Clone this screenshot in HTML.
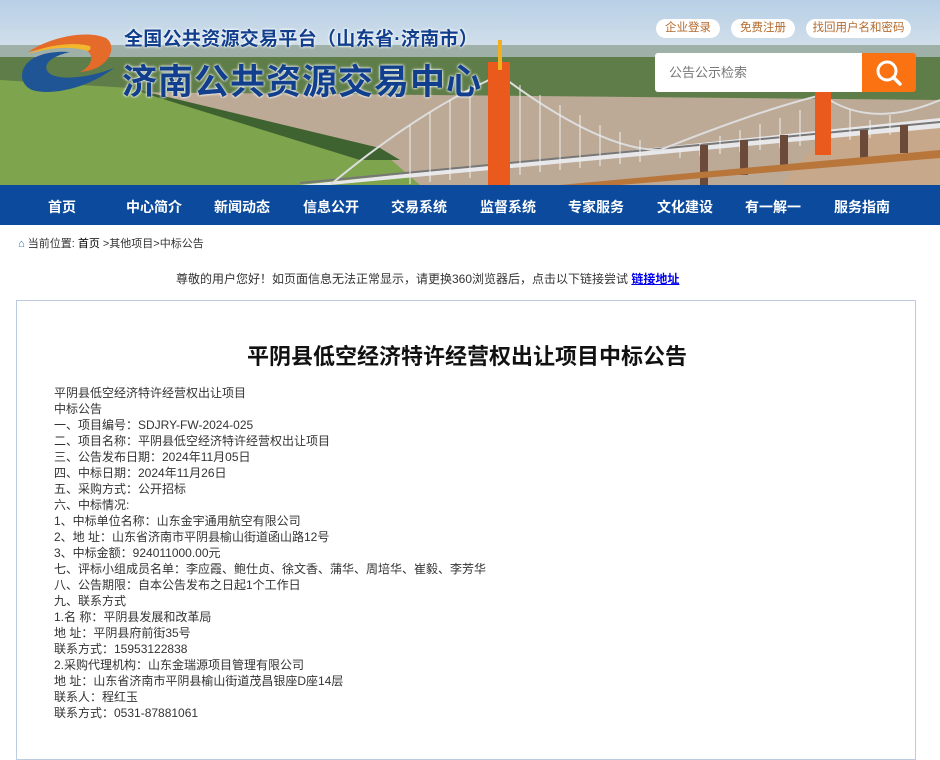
<!DOCTYPE html>
<html><head><meta charset="utf-8"><style>
*{margin:0;padding:0;box-sizing:border-box}
body{width:940px;height:741px;overflow:hidden;background:#fff;font-family:"Liberation Sans","Noto Sans CJK SC",sans-serif;color:#333;position:relative}
.hdr{position:absolute;left:0;top:0;width:940px;height:185px;overflow:hidden}
.nav{position:absolute;left:0;top:185px;width:940px;height:40px;background:#0b4a9c}
.nav span{position:absolute;top:12px;color:#fff;font-size:14px;font-weight:bold}
.t1{position:absolute;left:124px;top:24px;color:#123f8d;font-size:19px;font-weight:bold;letter-spacing:0.3px;text-shadow:0 0 3px #fff,0 0 2px #fff}
.t2{position:absolute;left:122px;top:54px;color:#123f8d;font-size:35px;font-weight:bold;letter-spacing:1px;text-shadow:0 0 3px #fff,0 0 2px #fff}
.pill{position:absolute;top:19px;height:19px;border-radius:10px;background:#fff;color:#b56a2c;font-size:11.5px;line-height:19px;text-align:center}
.search{position:absolute;left:655px;top:53px;width:208px;height:39px;background:#fff;border-radius:3px 0 0 3px;font-size:13px;color:#777;line-height:39px;padding-left:14px}
.sbtn{position:absolute;left:862px;top:53px;width:54px;height:39px;background:#fa7212;border-radius:0 3px 3px 0}
.bc{position:absolute;left:18px;top:235px;font-size:11px;color:#333}
.notice{position:absolute;top:270px;font-size:12px;color:#333}
.notice a{color:#00e;font-weight:bold;text-decoration:underline}
.box{position:absolute;left:16px;top:300px;width:900px;height:460px;border:1px solid #bccbe0}
.title{position:absolute;left:0;width:900px;top:38px;text-align:center;font-size:22px;font-weight:bold;color:#111}
.body{position:absolute;left:37px;top:84px;font-size:12px;line-height:16px;color:#333}
</style></head><body>
<div class="hdr">
<svg width="940" height="185" viewBox="0 0 940 185" style="position:absolute;left:0;top:0">
<defs><linearGradient id="sky" x1="0" y1="0" x2="0" y2="1"><stop offset="0" stop-color="#b7cfe6"/><stop offset="1" stop-color="#d3e0ea"/></linearGradient></defs>
<rect width="940" height="50" fill="url(#sky)"/>
<rect y="45" width="940" height="60" fill="#5f7d48"/>
<rect y="45" width="940" height="12" fill="#9fb0a8"/>
<path d="M120 92 L940 100 L940 185 L330 185 Z" fill="#bca996"/>
<path d="M0 80 L130 88 L380 150 L420 185 L0 185 Z" fill="#7ea44e"/>
<path d="M130 88 L380 148 L400 160 L360 160 L150 95 Z" fill="#3f6330"/>
<path d="M820 140 L940 125 L940 185 L780 185 Z" fill="#c8a88a"/>
<path d="M300 185 L940 118 L940 128 L330 185 Z" fill="#e8e8ea"/>
<path d="M300 183 L940 122" stroke="#777" stroke-width="2"/>
<path d="M330 185 Q420 110 500 75 Q600 150 660 150 Q760 110 822 95 Q870 130 940 100" fill="none" stroke="#ddd" stroke-width="2"/>
<g stroke="#eee" stroke-width="1">
<path d="M520 85 V175 M540 95 V172 M560 105 V170 M580 115 V168 M600 125 V166 M620 132 V164 M640 140 V162 M680 148 V158 M700 143 V156 M720 136 V154 M740 130 V152 M760 124 V150 M780 118 V148 M800 110 V146 M850 110 V140 M870 120 V138 M890 115 V135 M470 90 V178 M450 100 V180 M430 112 V182 M410 125 V184"/>
</g>
<rect x="488" y="62" width="22" height="123" fill="#e95a1c"/>
<rect x="498" y="40" width="4" height="30" fill="#f0b020"/>
<rect x="815" y="90" width="16" height="65" fill="#e95a1c"/>
<g fill="#6b4a3a"><rect x="700" y="145" width="8" height="40"/><rect x="740" y="140" width="8" height="35"/><rect x="780" y="135" width="8" height="35"/><rect x="860" y="130" width="8" height="30"/><rect x="900" y="125" width="8" height="28"/></g>
<path d="M560 185 L940 150 L940 158 L620 185Z" fill="#b8763a"/>
</svg>
<svg style="position:absolute;left:18px;top:30px" width="96" height="64" viewBox="0 0 96 64">
<path d="M10 22 C34 6 70 0 88 8 C100 16 92 40 62 42 C78 34 76 20 62 18 C44 16 26 18 10 22Z" fill="#e46b2a"/>
<path d="M10 24 C30 14 58 12 72 16 C74 20 70 22 66 20 C50 16 30 18 10 24Z" fill="#f3b72e"/>
<path d="M4 46 C4 30 24 20 52 22 C34 26 24 34 30 42 C36 50 66 50 96 38 C70 58 34 66 14 60 C6 56 4 50 4 46Z" fill="#1f5595"/>
</svg>
</div>
<div class="t1">全国公共资源交易平台（山东省·济南市）</div>
<div class="t2">济南公共资源交易中心</div>
<div class="pill" style="left:656px;width:64px">企业登录</div>
<div class="pill" style="left:731px;width:64px">免费注册</div>
<div class="pill" style="left:806px;width:105px">找回用户名和密码</div>
<div class="search">公告公示检索</div>
<div class="sbtn"><svg width="54" height="39" viewBox="0 0 54 39"><circle cx="25" cy="18" r="9" fill="none" stroke="#fff" stroke-width="3"/><path d="M31.5 24.5 L38 31" stroke="#fff" stroke-width="3.5" stroke-linecap="round"/></svg></div>
<div class="nav">
<span style="left:48px">首页</span><span style="left:126px">中心简介</span><span style="left:214px">新闻动态</span><span style="left:303px">信息公开</span><span style="left:391px">交易系统</span><span style="left:480px">监督系统</span><span style="left:568px">专家服务</span><span style="left:657px">文化建设</span><span style="left:745px">有一解一</span><span style="left:834px">服务指南</span>
</div>
<div class="bc"><span style="color:#2a6fc0">⌂</span> 当前位置: <span style="color:#000">首页</span> &gt;其他项目&gt;中标公告</div>
<div class="notice" style="left:176px">尊敬的用户您好！如页面信息无法正常显示，请更换360浏览器后，点击以下链接尝试 <a>链接地址</a></div>
<div class="box">
<div class="title">平阴县低空经济特许经营权出让项目中标公告</div>
<div class="body">平阴县低空经济特许经营权出让项目<br>中标公告<br>一、项目编号：SDJRY-FW-2024-025<br>二、项目名称：平阴县低空经济特许经营权出让项目<br>三、公告发布日期：2024年11月05日<br>四、中标日期：2024年11月26日<br>五、采购方式：公开招标<br>六、中标情况:<br>1、中标单位名称：山东金宇通用航空有限公司<br>2、地 址：山东省济南市平阴县榆山街道函山路12号<br>3、中标金额：924011000.00元<br>七、评标小组成员名单：李应霞、鲍仕贞、徐文香、蒲华、周培华、崔毅、李芳华<br>八、公告期限：自本公告发布之日起1个工作日<br>九、联系方式<br>1.名 称：平阴县发展和改革局<br>地 址：平阴县府前街35号<br>联系方式：15953122838<br>2.采购代理机构：山东金瑞源项目管理有限公司<br>地 址：山东省济南市平阴县榆山街道茂昌银座D座14层<br>联系人：程红玉<br>联系方式：0531-87881061</div>
</div>
</body></html>
